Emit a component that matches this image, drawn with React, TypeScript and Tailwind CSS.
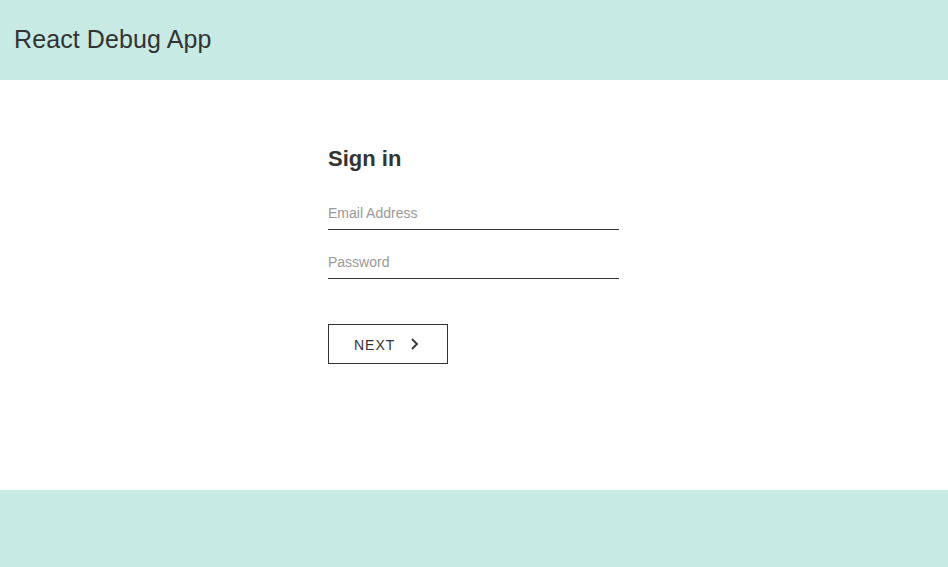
export default function App() {
  return (
    <div className="flex h-screen flex-col bg-white font-['Liberation_Sans',Arial,sans-serif] text-[#333]">
      <header className="flex h-[80px] shrink-0 items-center bg-[#c7eae4] px-[14px] pb-[2px]">
        <h1 className="text-[25px] leading-none tracking-[0.1px] text-[#333]">React Debug App</h1>
      </header>

      <main className="flex flex-1 justify-center pt-[66px]">
        <form className="flex w-[292px] flex-col" onSubmit={(e) => e.preventDefault()}>
          <h2 className="text-[22px] font-bold leading-[26px] text-[#333]">Sign in</h2>
          <input
            type="email"
            placeholder="Email Address"
            className="mt-[25px] h-[33px] w-[291px] border-b border-[#333] bg-transparent text-[14px] outline-none placeholder:text-[#999]"
          />
          <input
            type="password"
            placeholder="Password"
            className="mt-[16px] h-[33px] w-[291px] border-b border-[#333] bg-transparent text-[14px] outline-none placeholder:text-[#999]"
          />
          <button
            type="submit"
            className="mt-[45px] flex h-[40px] w-[120px] items-center border border-[#333] pl-[25px] pt-[2px] text-[14px] tracking-[1px] text-[#333]"
          >
            NEXT
            <svg className="ml-[15px] -mt-[2px]" width="9" height="12" viewBox="0 0 9 12" fill="none">
              <path d="M2 1l5 5-5 5" stroke="#333" strokeWidth="1.8" />
            </svg>
          </button>
        </form>
      </main>

      <footer className="h-[77px] shrink-0 bg-[#c7eae4]" />
    </div>
  );
}
